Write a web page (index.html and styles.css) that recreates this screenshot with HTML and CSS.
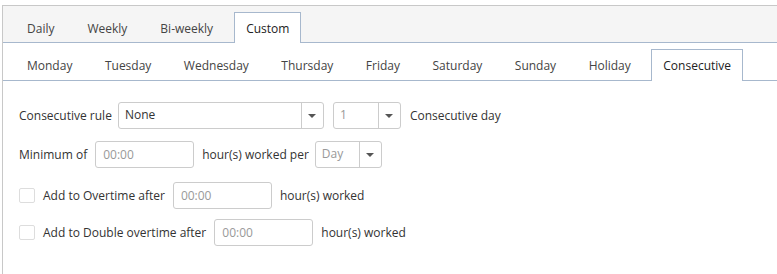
FILE: index.html
```html
<!DOCTYPE html>
<html>
  <head>
    <meta charset="UTF-8">
    <title>Consecutive rule</title>
    <link rel="stylesheet" href="styles.css">
  </head>
  <body>
  <div class="panel">
    <ul class="tabs tabs-main">
      <li>Daily</li><li>Weekly</li><li>Bi-weekly</li><li class="active">Custom</li>
    </ul>
    <ul class="tabs tabs-sub">
      <li>Monday</li><li>Tuesday</li><li>Wednesday</li><li>Thursday</li><li>Friday</li>
      <li>Saturday</li><li>Sunday</li><li>Holiday</li><li class="active">Consecutive</li>
    </ul>

    <form class="rule-form">
      <div class="row row-rule">
        <label>Consecutive rule</label>
        <div class="select select-rule"><span class="value">None</span><span class="arrow"></span></div>
        <div class="select select-num"><span class="value muted">1</span><span class="arrow"></span></div>
        <span class="after">Consecutive day</span>
      </div>
      <div class="row row-min">
        <label>Minimum of</label>
        <input class="time" type="text" placeholder="00:00">
        <span>hour(s) worked per</span>
        <div class="select select-per"><span class="value muted">Day</span><span class="arrow"></span></div>
      </div>
      <div class="row row-ot">
        <input class="check" type="checkbox">
        <label>Add to Overtime after</label>
        <input class="time" type="text" placeholder="00:00">
        <span>hour(s) worked</span>
      </div>
      <div class="row">
        <input class="check" type="checkbox">
        <label>Add to Double overtime after</label>
        <input class="time" type="text" placeholder="00:00">
        <span>hour(s) worked</span>
      </div>
    </form>
  </div>
  </body>
</html>
```

FILE: styles.css
```css
body{margin:0;font-family:"Open Sans","Noto Sans",sans-serif;font-size:12px;color:#333;background:#fff;}
.panel{margin:5px 0 0 2px;border-top:1px solid #c8c8c8;border-left:1px solid #c8c8c8;height:268px;}

.tabs{display:flex;margin:0;padding:6px 0 0 12px;list-style:none;border-bottom:1px solid #a7b8cd;}
.tabs li{box-sizing:border-box;padding:0 11px;margin:0 9px -1px 0;border:1px solid transparent;border-bottom:0;color:#444;white-space:nowrap;}
.tabs li.active{background:#fff;border-color:#a7b8cd;color:#222;}
.tabs-main{background:#f5f5f5;}
.tabs-main li{height:31px;line-height:31px;}
.tabs-sub li{height:32px;line-height:32px;margin-right:8.5px;}

.rule-form{padding:21px 16px 0 16px;}
.row{display:flex;align-items:center;gap:8px;height:27px;margin-bottom:12px;}
.row-rule{gap:6px;}
.row-rule .select-num,.row-rule .after{margin-left:3px;}
.row-min{margin-bottom:14px;}
.row-min .select-per{margin-left:-2px;}
.row-ot{margin-bottom:10px;}
.row label{color:#333;}

.select{box-sizing:border-box;display:flex;height:27px;border:1px solid #ccc;border-radius:3px;background:#fff;}
.select .value{flex:1;padding:0 6px;line-height:24px;}
.select .value.muted{color:#999;}
.select .arrow{width:21px;border-left:1px solid #ccc;display:flex;align-items:center;justify-content:center;}
.select .arrow:after{content:"";border-left:4px solid transparent;border-right:4px solid transparent;border-top:4px solid #555;}
.select-rule{width:206px;}
.select-num{width:68px;}
.select-per{width:67px;}

.time{box-sizing:border-box;width:99px;height:27px;padding:0 7px;border:1px solid #ccc;border-radius:3px;font-family:inherit;font-size:12px;color:#333;}
.time::placeholder{color:#999;}
.check{-webkit-appearance:none;appearance:none;box-sizing:border-box;width:16px;height:15px;margin:0;border:1px solid #ddd;border-radius:2px;background:#fff;}
```
